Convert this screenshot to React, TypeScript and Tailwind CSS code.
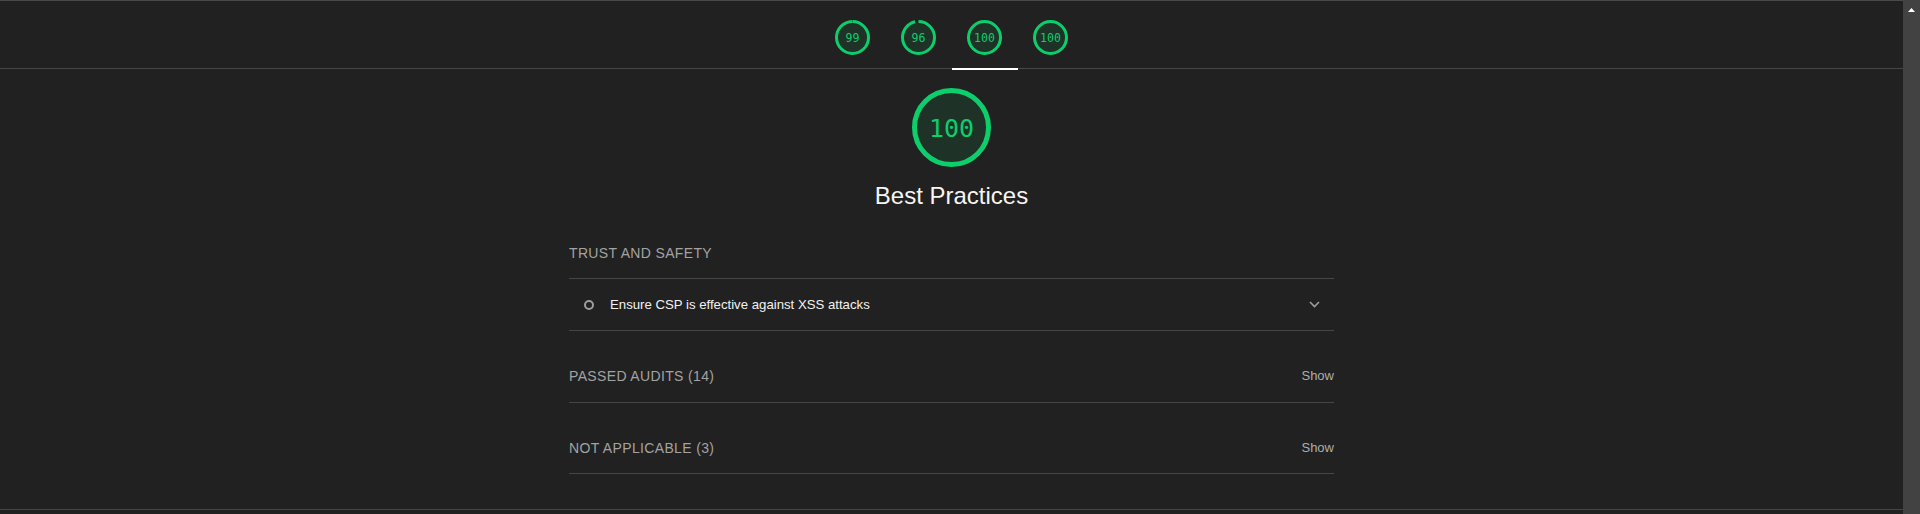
import type { ReactNode } from "react";

const GREEN = "#0cce6b";

function Gauge({
  score,
  size,
  stroke,
  fontSize,
}: {
  score: number;
  size: number;
  stroke: number;
  fontSize: number;
}) {
  const c = size / 2;
  const r = (size - stroke) / 2;
  const circ = 2 * Math.PI * r;
  return (
    <svg width={size} height={size} viewBox={`0 0 ${size} ${size}`} className="block">
      <circle cx={c} cy={c} r={r} fill="#1f3228" />
      <circle
        cx={c}
        cy={c}
        r={r}
        fill="none"
        stroke={GREEN}
        strokeWidth={stroke}
        strokeDasharray={`${(circ * score) / 100} ${circ}`}
        transform={`rotate(-90 ${c} ${c})`}
      />
      <text
        x={c}
        y={c + 0.5}
        textAnchor="middle"
        dominantBaseline="central"
        fill={GREEN}
        fontSize={fontSize}
        fontFamily="'DejaVu Sans Mono', 'Liberation Mono', monospace"
      >
        {score}
      </text>
    </svg>
  );
}

function Tab({ score, active }: { score: number; active?: boolean }) {
  return (
    <div className="relative flex h-full w-[66px] justify-center pt-[19px]">
      <Gauge score={score} size={35} stroke={3} fontSize={11.5} />
      {active && <div className="absolute -bottom-[2px] left-0 h-[2px] w-full bg-white" />}
    </div>
  );
}

function GroupHeader({ children, right, className }: { children: ReactNode; right?: ReactNode; className: string }) {
  return (
    <div className={`flex items-center justify-between border-b border-[#464646] ${className}`}>
      <div className="text-[14px] leading-[20px] tracking-[0.35px] text-[#a3a3a3] uppercase">{children}</div>
      {right && <div className="text-[13px] leading-[20px] text-[#adadad]">{right}</div>}
    </div>
  );
}

export default function App() {
  return (
    <div className="flex h-[514px] w-full overflow-hidden bg-[#212121] font-['Liberation_Sans',Arial,sans-serif]">
      <div className="flex w-[1903px] flex-col border-t border-[#4a4a4a]">
        <div className="flex h-[68px] justify-center border-b border-[#464646]">
          <Tab score={99} />
          <Tab score={96} />
          <Tab score={100} active />
          <Tab score={100} />
        </div>

        <div className="flex flex-col items-center pt-[19px]">
          <Gauge score={100} size={79} stroke={5} fontSize={25} />
          <div className="mt-[15px] text-[24px] leading-[28px] text-[#f5f5f5]">Best Practices</div>
        </div>

        <div className="mx-auto w-[765px]">
          <GroupHeader className="pt-[33px] pb-[15px]">Trust and Safety</GroupHeader>
          <div className="flex h-[52px] items-center border-b border-[#464646] pr-[14px] pl-[15px]">
            <div className="h-[10px] w-[10px] rounded-full border-2 border-[#9e9e9e]" />
            <div className="ml-[16px] flex-1 text-[13.2px] text-[#f2f2f2]">
              Ensure CSP is effective against XSS attacks
            </div>
            <svg width="11" height="7" viewBox="0 0 11 7" className="block">
              <polyline points="1,1 5.5,5.5 10,1" fill="none" stroke="#9e9e9e" strokeWidth="1.6" />
            </svg>
          </div>
          <GroupHeader className="pt-[35px] pb-[16px]" right="Show">
            Passed audits (14)
          </GroupHeader>
          <GroupHeader className="pt-[35px] pb-[15px]" right="Show">
            Not applicable (3)
          </GroupHeader>
        </div>

        <div className="mt-[35px] border-b border-[#464646]" />
      </div>

      <div className="flex w-[17px] justify-center bg-[#424242] pt-[8px]">
        <svg width="7" height="4" viewBox="0 0 7 4" className="block">
          <polygon points="3.5,0 7,4 0,4" fill="#ffffff" />
        </svg>
      </div>
    </div>
  );
}
